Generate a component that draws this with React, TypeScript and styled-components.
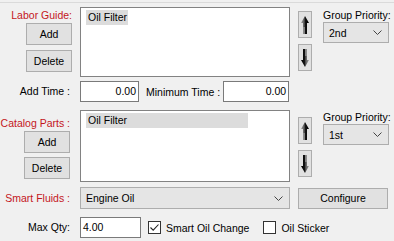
import React from 'react';
import styled, { createGlobalStyle } from 'styled-components';

const GlobalStyle = createGlobalStyle`
  html, body {
    margin: 0;
    padding: 0;
    background: #f0f0f0;
  }
  body {
    font-family: "Liberation Sans", Arial, sans-serif;
    font-size: 10.5px;
    color: #000;
  }
`;

const Page = styled.div`
  width: 394px;
  height: 241px;
  box-sizing: border-box;
  border-top: 1px solid #dadada;
  margin-top: 2px;
  padding-top: 4px;
  overflow: hidden;
`;

const Section = styled.div<{ $height: number; $gap: number }>`
  display: flex;
  height: ${p => p.$height}px;
  margin-bottom: ${p => p.$gap}px;
`;

const LabelCol = styled.div<{ $pad?: number }>`
  width: 80px;
  flex: none;
  display: flex;
  flex-direction: column;
  align-items: flex-end;
  box-sizing: border-box;
  padding-right: ${p => p.$pad ?? 10}px;
`;

const Label = styled.div<{ $red?: boolean; $top?: number }>`
  color: ${p => (p.$red ? '#c4161c' : '#000')};
  line-height: 14px;
  margin-top: ${p => p.$top ?? 0}px;
  white-space: nowrap;
`;

const RowLabel = styled(Label)`
  line-height: 20px;
`;

const Button = styled.button<{ $w: number; $h?: number; $top?: number }>`
  width: ${p => p.$w}px;
  height: ${p => p.$h ?? 22}px;
  margin: ${p => p.$top ?? 0}px 0 0 0;
  padding: 0;
  background: #e1e1e1;
  border: 1px solid #adadad;
  font-family: inherit;
  font-size: 10.5px;
  color: #000;
  flex: none;
`;

const ListBox = styled.div`
  width: 210px;
  height: 100%;
  box-sizing: border-box;
  background: #fff;
  border: 1px solid #828282;
  padding: 2px 0 0 5px;
  flex: none;
`;

const ListItem = styled.div<{ $w?: number }>`
  display: inline-block;
  min-width: ${p => p.$w ?? 0}px;
  height: 15px;
  line-height: 15px;
  background: #dcdcdc;
  padding: 0 1px 0 2px;
  box-sizing: border-box;
  white-space: nowrap;
`;

const ArrowCol = styled.div<{ $top: number }>`
  width: 33px;
  flex: none;
  display: flex;
  flex-direction: column;
  gap: 6px;
  padding: ${p => p.$top}px 0 0 8px;
  box-sizing: border-box;
`;

const ArrowButton = styled.div`
  width: 14px;
  height: 27px;
  box-sizing: border-box;
  background: #e1e1e1;
  border: 1px solid #adadad;
  display: flex;
  align-items: center;
  justify-content: center;
`;

const SideCol = styled.div<{ $top: number }>`
  display: flex;
  flex-direction: column;
  padding-top: ${p => p.$top}px;
`;

const Select = styled.div<{ $w: number; $h?: number }>`
  width: ${p => p.$w}px;
  height: ${p => p.$h ?? 21}px;
  box-sizing: border-box;
  background: #e5e5e5;
  border: 1px solid #adadad;
  display: flex;
  align-items: center;
  justify-content: space-between;
  padding: 0 6px 0 5px;
  flex: none;
`;

const TextInput = styled.div<{ $w: number; $right?: boolean }>`
  width: ${p => p.$w}px;
  height: 21px;
  box-sizing: border-box;
  background: #fff;
  border: 1px solid #7a7a7a;
  line-height: 19px;
  padding: 0 2px;
  text-align: ${p => (p.$right ? 'right' : 'left')};
  flex: none;
`;

const Row = styled.div<{ $pad?: number }>`
  display: flex;
  align-items: center;
  padding-left: ${p => p.$pad ?? 0}px;
`;

const InlineLabel = styled(RowLabel)`
  margin: 0 3px 0 7px;
`;

const Check = styled.div`
  width: 13px;
  height: 13px;
  box-sizing: border-box;
  background: #fff;
  border: 1px solid #333;
  display: flex;
  align-items: center;
  justify-content: center;
  flex: none;
`;

const CheckLabel = styled.label<{ $left: number }>`
  display: flex;
  align-items: center;
  gap: 5px;
  margin-left: ${p => p.$left}px;
`;

const Chevron = () => (
  <svg width="9" height="5" viewBox="0 0 9 5">
    <path d="M0.5 0.5 L4.5 4.5 L8.5 0.5" fill="none" stroke="#444" strokeWidth="1" />
  </svg>
);

const Arrow = ({ down }: { down?: boolean }) => (
  <svg width="8" height="18" viewBox="0 0 8 18" style={down ? { transform: 'rotate(180deg)' } : undefined}>
    <defs>
      <linearGradient id={down ? 'ad' : 'au'} x1="0" x2="1" y1="0" y2="0">
        <stop offset="0" stopColor="#a0a0a0" />
        <stop offset="0.4" stopColor="#5a5a5a" />
        <stop offset="0.55" stopColor="#111" />
        <stop offset="1" stopColor="#000" />
      </linearGradient>
    </defs>
    <polygon points="4,0 8,7 6,7 6,18 2,18 2,7 0,7" fill={`url(#${down ? 'ad' : 'au'})`} />
    <polygon points="2,11 4,11 4,18 2,18" fill="#9a9a9a" opacity="0.7" />
  </svg>
);

const Tick = () => (
  <svg width="11" height="11" viewBox="0 0 11 11">
    <path d="M1.5 5.5 L4.2 8.2 L9.5 2.5" fill="none" stroke="#222" strokeWidth="1.1" />
  </svg>
);

const App = () => (
  <>
    <GlobalStyle />
    <Page>
      <Section $height={70} $gap={4}>
        <LabelCol $pad={8}>
          <Label $red $top={1}>Labor Guide:</Label>
          <Button $w={46} $top={1}>Add</Button>
          <Button $w={46} $top={5}>Delete</Button>
        </LabelCol>
        <ListBox>
          <ListItem>Oil Filter</ListItem>
        </ListBox>
        <ArrowCol $top={4}>
          <ArrowButton><Arrow /></ArrowButton>
          <ArrowButton><Arrow down /></ArrowButton>
        </ArrowCol>
        <SideCol $top={1}>
          <Label>Group Priority:</Label>
          <Select $w={66}>2nd<Chevron /></Select>
        </SideCol>
      </Section>

      <Section $height={21} $gap={8}>
        <LabelCol>
          <RowLabel>Add Time :</RowLabel>
        </LabelCol>
        <Row>
          <TextInput $w={59} $right>0.00</TextInput>
          <InlineLabel>Minimum Time :</InlineLabel>
          <TextInput $w={66} $right>0.00</TextInput>
        </Row>
      </Section>

      <Section $height={72} $gap={5}>
        <LabelCol>
          <Label $red $top={6}>Catalog Parts :</Label>
          <Button $w={46} $top={1}>Add</Button>
          <Button $w={46} $top={4}>Delete</Button>
        </LabelCol>
        <ListBox>
          <ListItem $w={162}>Oil Filter</ListItem>
        </ListBox>
        <ArrowCol $top={7}>
          <ArrowButton><Arrow /></ArrowButton>
          <ArrowButton><Arrow down /></ArrowButton>
        </ArrowCol>
        <SideCol $top={0}>
          <Label>Group Priority:</Label>
          <Select $w={66}>1st<Chevron /></Select>
        </SideCol>
      </Section>

      <Section $height={22} $gap={8}>
        <LabelCol>
          <RowLabel $red style={{ lineHeight: '22px' }}>Smart Fluids :</RowLabel>
        </LabelCol>
        <Select $w={210} $h={22}>Engine Oil<Chevron /></Select>
        <Row $pad={8}>
          <Button $w={90} $h={21}>Configure</Button>
        </Row>
      </Section>

      <Section $height={21} $gap={0}>
        <LabelCol>
          <RowLabel>Max Qty:</RowLabel>
        </LabelCol>
        <Row>
          <TextInput $w={61}>4.00</TextInput>
          <CheckLabel $left={7}>
            <Check><Tick /></Check>
            Smart Oil Change
          </CheckLabel>
          <CheckLabel $left={14}>
            <Check />
            Oil Sticker
          </CheckLabel>
        </Row>
      </Section>
    </Page>
  </>
);

export default App;
